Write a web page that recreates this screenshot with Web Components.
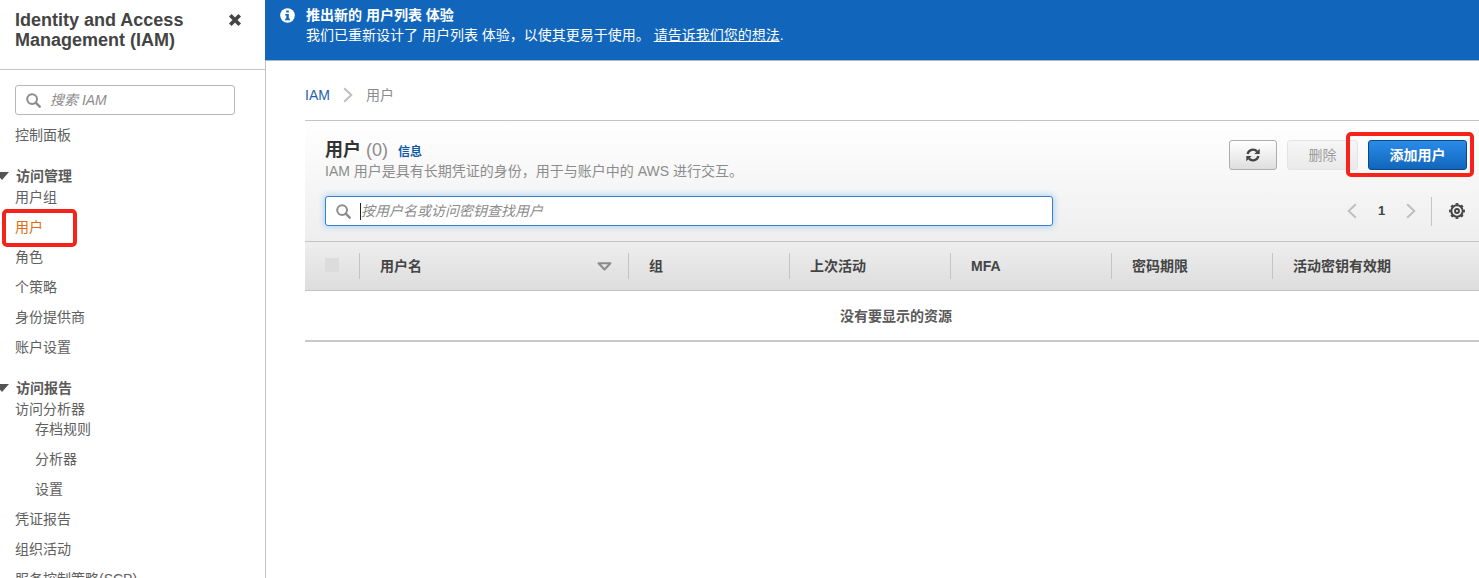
<!DOCTYPE html>
<html lang="zh-CN">
<head>
<meta charset="utf-8">
<title>IAM</title>
<style>
html, body {
    margin: 0;
    height: 100%;
    overflow: hidden;
}
body {
    background: #ffffff;
    color: #444444;
    font: 14px/20px "Liberation Sans", "Noto Sans CJK SC", sans-serif;
}
</style>
</head>
<body>
<iam-app></iam-app>

<script>
// small helper, every element clones its own template
function render(el, html) {
    const template = document.createElement('template');
    template.innerHTML = html;
    el.attachShadow({mode: 'open'});
    el.shadowRoot.appendChild(template.content.cloneNode(true));
}

// icons

const icons = {
    search: '<svg width="15" height="15" viewBox="0 0 15 15"><circle cx="6.1" cy="6.1" r="4.900" fill="none" stroke="#8c8c8c" stroke-width="2"/><path d="M9.700 9.700l4 4" stroke="#8c8c8c" stroke-width="2.400" stroke-linecap="round"/></svg>',
    close: '<svg width="14" height="14" viewBox="0 0 14 14"><path d="M2.300 2.300l9.400 9.400M11.700 2.300l-9.400 9.400" stroke="#444" stroke-width="3.700"/></svg>',
    info: '<svg width="15" height="15" viewBox="0 0 15 15"><circle cx="7.500" cy="7.500" r="7.300" fill="#fff"/><path d="M6.200 2.600h2.600v2H6.200zM5.200 5.900h3.600v4.700h1.100v1.700H5.200v-1.700h1.100V7.500H5.200z" fill="#1166bb"/></svg>',
    refresh: '<svg width="16" height="16" viewBox="0 0 16 16"><path d="M2.600 7A5.500 5.500 0 0 1 12 4.400M13.400 9A5.500 5.500 0 0 1 4 11.600" fill="none" stroke="#444" stroke-width="2.300"/><path d="M14.700 1.700v5.400H9.300zM1.300 14.300V8.900h5.400z" fill="#444"/></svg>',
    right: '<svg width="10" height="16" viewBox="0 0 10 16"><path d="M1.200 1.200L8.300 8l-7.100 6.800" fill="none" stroke="#bfbfbf" stroke-width="2"/></svg>',
    left: '<svg width="10" height="16" viewBox="0 0 10 16"><path d="M8.800 1.200L1.700 8l7.100 6.800" fill="none" stroke="#bfbfbf" stroke-width="2"/></svg>',
    sort: '<svg width="15" height="9" viewBox="0 0 15 9"><path d="M1.600 1.300h11.800L7.500 7.500z" fill="none" stroke="#8c8c8c" stroke-width="2.100" stroke-linejoin="round"/></svg>',
    caret: '<svg width="9" height="8" viewBox="0 0 9 8"><path d="M-5 0H9L2 8z" fill="#545454"/></svg>',
    gear: '<svg width="16" height="16" viewBox="0 0 16 16"><circle cx="8" cy="8" r="5.700" fill="none" stroke="#444" stroke-width="2"/><circle cx="8" cy="8" r="7.100" fill="none" stroke="#444" stroke-width="1.700" pathLength="16" stroke-dasharray="1 1" stroke-dashoffset="0.5"/><circle cx="8" cy="8" r="2" fill="none" stroke="#444" stroke-width="1.900"/></svg>'
};

class IamIcon extends HTMLElement {
    constructor() {
        super();
        render(this, `
        <style>
            :host { display: inline-flex; flex: none; }
            svg { display: block; }
        </style>
        ${icons[this.getAttribute('name')]}
        `);
    }
}

// search box, "focused" shows the blue glow and the caret

class SearchBox extends HTMLElement {
    constructor() {
        super();
        render(this, `
        <style>
            :host {
                display: flex;
                align-items: center;
                box-sizing: border-box;
                height: 30px;
                padding-left: 10px;
                border: 1px solid #b8b8b8;
                border-radius: 3px;
                background: #fff;
                color: #8c8c8c;
                font-style: italic;
            }
            :host([focused]) {
                border-color: #3a7fc8;
                box-shadow: 0 0 6px 1px #a9d2f5;
            }
            .caret {
                width: 1px;
                height: 17px;
                margin-left: 8px;
            }
            :host([focused]) .caret { margin-left: 9px; background: #222; }
        </style>
        <iam-icon name="search"></iam-icon>
        <span class="caret"></span>
        <slot></slot>
        `);
    }
}

// side navigation

class NavItem extends HTMLElement {
    constructor() {
        super();
        render(this, `
        <style>
            :host {
                display: block;
                margin: 0 0 10px 15px;
                height: 20px;
                color: #606060;
                white-space: nowrap;
            }
            :host([active]) { color: #dd6b10; }
            :host([parent]) { margin-bottom: 0; }
            :host([nested]) { margin-left: 35px; }
        </style>
        <slot></slot>
        `);
    }
}

class NavSection extends HTMLElement {
    constructor() {
        super();
        render(this, `
        <style>
            :host { display: block; padding-top: 11px; }
            .heading {
                display: flex;
                align-items: center;
                gap: 7px;
                height: 20px;
                margin-bottom: 1px;
                font-weight: bold;
                color: #5a5a5a;
            }
        </style>
        <div class="heading"><iam-icon name="caret"></iam-icon><slot name="heading"></slot></div>
        <slot></slot>
        `);
    }
}

class SideNav extends HTMLElement {
    constructor() {
        super();
        render(this, `
        <style>
            :host { display: block; width: 265px; flex: none; overflow: hidden; }
            header {
                display: flex;
                justify-content: space-between;
                align-items: flex-start;
                box-sizing: border-box;
                height: 70px;
                padding: 10px 23px 0 15px;
                border-bottom: 1px solid #c4c4c4;
            }
            h2 { margin: 0; width: 190px; font-size: 18px; line-height: 20px; color: #444; }
            header iam-icon { padding-top: 3px; }
            search-box { margin: 15px 30px 10px 15px; }
            nav > nav-item { margin-bottom: 10px; }
        </style>
        <header>
            <h2>Identity and Access Management (IAM)</h2>
            <iam-icon name="close"></iam-icon>
        </header>
        <search-box>搜索 IAM</search-box>
        <nav>
            <nav-item>控制面板</nav-item>
            <nav-section>
                <span slot="heading">访问管理</span>
                <nav-item>用户组</nav-item>
                <nav-item active>用户</nav-item>
                <nav-item>角色</nav-item>
                <nav-item>个策略</nav-item>
                <nav-item>身份提供商</nav-item>
                <nav-item>账户设置</nav-item>
            </nav-section>
            <nav-section>
                <span slot="heading">访问报告</span>
                <nav-item parent>访问分析器</nav-item>
                <nav-item nested>存档规则</nav-item>
                <nav-item nested>分析器</nav-item>
                <nav-item nested>设置</nav-item>
                <nav-item>凭证报告</nav-item>
                <nav-item>组织活动</nav-item>
                <nav-item>服务控制策略(SCP)</nav-item>
            </nav-section>
        </nav>
        `);
    }
}

// blue banner

class InfoBanner extends HTMLElement {
    constructor() {
        super();
        render(this, `
        <style>
            :host {
                display: flex;
                align-items: flex-start;
                gap: 11px;
                box-sizing: border-box;
                height: 61px;
                padding: 5px 15px 0;
                border-bottom: 1px solid #a5b8c8;
                background: #1166bb;
                color: #fff;
            }
            iam-icon { padding-top: 3px; }
            p { margin: 0; white-space: pre; }
            a { color: #fff; text-decoration: underline; }
        </style>
        <iam-icon name="info"></iam-icon>
        <div>
            <p><b>推出新的 用户列表 体验</b></p>
            <p>我们已重新设计了 用户列表 体验，以使其更易于使用。 <a>请告诉我们您的想法</a>.</p>
        </div>
        `);
    }
}

class BreadCrumb extends HTMLElement {
    constructor() {
        super();
        render(this, `
        <style>
            :host { display: flex; align-items: center; height: 20px; padding: 24px 0 15px; color: #8c8c8c; }
            a { color: #1d5fae; margin-right: 13px; }
            iam-icon { margin-right: 13px; }
        </style>
        <a>IAM</a><iam-icon name="right"></iam-icon><span>用户</span>
        `);
    }
}

class AwsButton extends HTMLElement {
    constructor() {
        super();
        render(this, `
        <style>
            :host {
                display: flex;
                align-items: center;
                justify-content: center;
                box-sizing: border-box;
                height: 30px;
                padding: 0 20.5px;
                border: 1px solid #adadad;
                border-radius: 3px;
                background: linear-gradient(#ffffff, #dedede);
                font-weight: bold;
            }
            :host([icon]) { padding: 0 15px; }
            :host([disabled]) {
                border-color: #e4e4e4;
                background: linear-gradient(#f6f6f6, #eaeaea);
                color: #9c9c9c;
                font-weight: normal;
            }
            :host([primary]) {
                border-color: #0b4887;
                background: linear-gradient(#2b8bea, #1166bb);
                color: #fff;
            }
        </style>
        <slot></slot>
        `);
    }
}

class PageNav extends HTMLElement {
    constructor() {
        super();
        render(this, `
        <style>
            :host { display: flex; align-items: center; height: 30px; padding-right: 2px; }
            b { width: 49px; text-align: center; font-size: 13px; }
            .line { width: 1px; height: 29px; margin: 0 17px 0 15px; background: #c4c4c4; }
        </style>
        <iam-icon name="left"></iam-icon>
        <b>1</b>
        <iam-icon name="right"></iam-icon>
        <span class="line"></span>
        <iam-icon name="gear"></iam-icon>
        `);
    }
}

// table

class UserTable extends HTMLElement {
    constructor() {
        super();
        render(this, `
        <style>
            :host { display: block; border-bottom: 2px solid #c8c8c8; }
            .head {
                display: grid;
                grid-template-columns: 55px 269px repeat(4, 161px) 1fr;
                align-items: center;
                box-sizing: border-box;
                height: 50px;
                border: solid #c4c4c4;
                border-width: 1px 0;
                background: linear-gradient(#eeeeee, #dddddd);
                font-weight: bold;
                color: #444;
            }
            .head > div {
                display: flex;
                align-items: center;
                justify-content: space-between;
                box-sizing: border-box;
                height: 26px;
                padding: 0 16px 0 20px;
                border-right: 1px solid #c4c4c4;
                white-space: nowrap;
            }
            .head > div:last-child { border: 0; }
            .check { width: 14px; height: 14px; margin-bottom: 2px; background: #dcdcdc; }
            .empty {
                height: 49px;
                line-height: 51px;
                width: 1182px;
                text-align: center;
                font-weight: bold;
                color: #5a5a5a;
            }
        </style>
        <div class="head">
            <div><span class="check"></span></div>
            <div>用户名<iam-icon name="sort"></iam-icon></div>
            <div>组</div>
            <div>上次活动</div>
            <div>MFA</div>
            <div>密码期限</div>
            <div>活动密钥有效期</div>
        </div>
        <div class="empty">没有要显示的资源</div>
        `);
    }
}

class UserPanel extends HTMLElement {
    constructor() {
        super();
        render(this, `
        <style>
            :host { display: block; border-top: 1px solid #c4c4c4; }
            .top {
                box-sizing: border-box;
                height: 120px;
                padding: 19px 12px 0 20px;
                background: linear-gradient(#ffffff, #eeeeee);
            }
            .row { display: flex; justify-content: space-between; align-items: flex-start; }
            .row + .row { margin-top: 14px; }
            h1 { display: flex; align-items: center; margin: 0; height: 20px; padding-bottom: 1px; font-size: 18px; color: #333; }
            h1 span { margin-left: 5px; font-weight: normal; color: #8c8c8c; }
            h1 a { margin: 3px 0 0 10px; font-size: 12px; line-height: 18px; color: #0f58a5; }
            p { margin: 0; height: 21px; line-height: 20px; color: #8c8c8c; }
            .actions { display: flex; gap: 10px; }
            search-box { width: 728px; }
        </style>
        <div class="top">
            <div class="row">
                <div>
                    <h1>用户<span>(0)</span><a>信息</a></h1>
                    <p>IAM 用户是具有长期凭证的身份，用于与账户中的 AWS 进行交互。</p>
                </div>
                <div class="actions">
                    <aws-button icon><iam-icon name="refresh"></iam-icon></aws-button>
                    <aws-button disabled>删除</aws-button>
                    <aws-button primary>添加用户</aws-button>
                </div>
            </div>
            <div class="row">
                <search-box focused>按用户名或访问密钥查找用户</search-box>
                <page-nav></page-nav>
            </div>
        </div>
        <user-table></user-table>
        `);
    }
}

// red frame drawn over the page

class RedMark extends HTMLElement {
    constructor() {
        super();
        render(this, `
        <style>
            :host {
                position: absolute;
                box-sizing: border-box;
                border: 4px solid #f5231a;
                border-radius: 5px;
                pointer-events: none;
            }
        </style>
        `);
    }
}

class IamApp extends HTMLElement {
    constructor() {
        super();
        render(this, `
        <style>
            :host { display: flex; position: relative; height: 100vh; overflow: hidden; }
            main { display: flex; flex-direction: column; flex: 1; min-width: 0; }
            .content { flex: 1; padding-left: 39px; border-left: 1px solid #c4c4c4; }
            .mark-nav { left: 2px; top: 209px; width: 75px; height: 38px; }
            .mark-add { left: 1346px; top: 132px; width: 128px; height: 45px; }
        </style>
        <side-nav></side-nav>
        <main>
            <info-banner></info-banner>
            <div class="content">
                <bread-crumb></bread-crumb>
                <user-panel></user-panel>
            </div>
        </main>
        <red-mark class="mark-nav"></red-mark>
        <red-mark class="mark-add"></red-mark>
        `);
    }
}

customElements.define('iam-icon', IamIcon)
customElements.define('search-box', SearchBox)
customElements.define('nav-item', NavItem)
customElements.define('nav-section', NavSection)
customElements.define('side-nav', SideNav)
customElements.define('info-banner', InfoBanner)
customElements.define('bread-crumb', BreadCrumb)
customElements.define('aws-button', AwsButton)
customElements.define('page-nav', PageNav)
customElements.define('user-table', UserTable)
customElements.define('user-panel', UserPanel)
customElements.define('red-mark', RedMark)
customElements.define('iam-app', IamApp)
</script>
</body>
</html>
